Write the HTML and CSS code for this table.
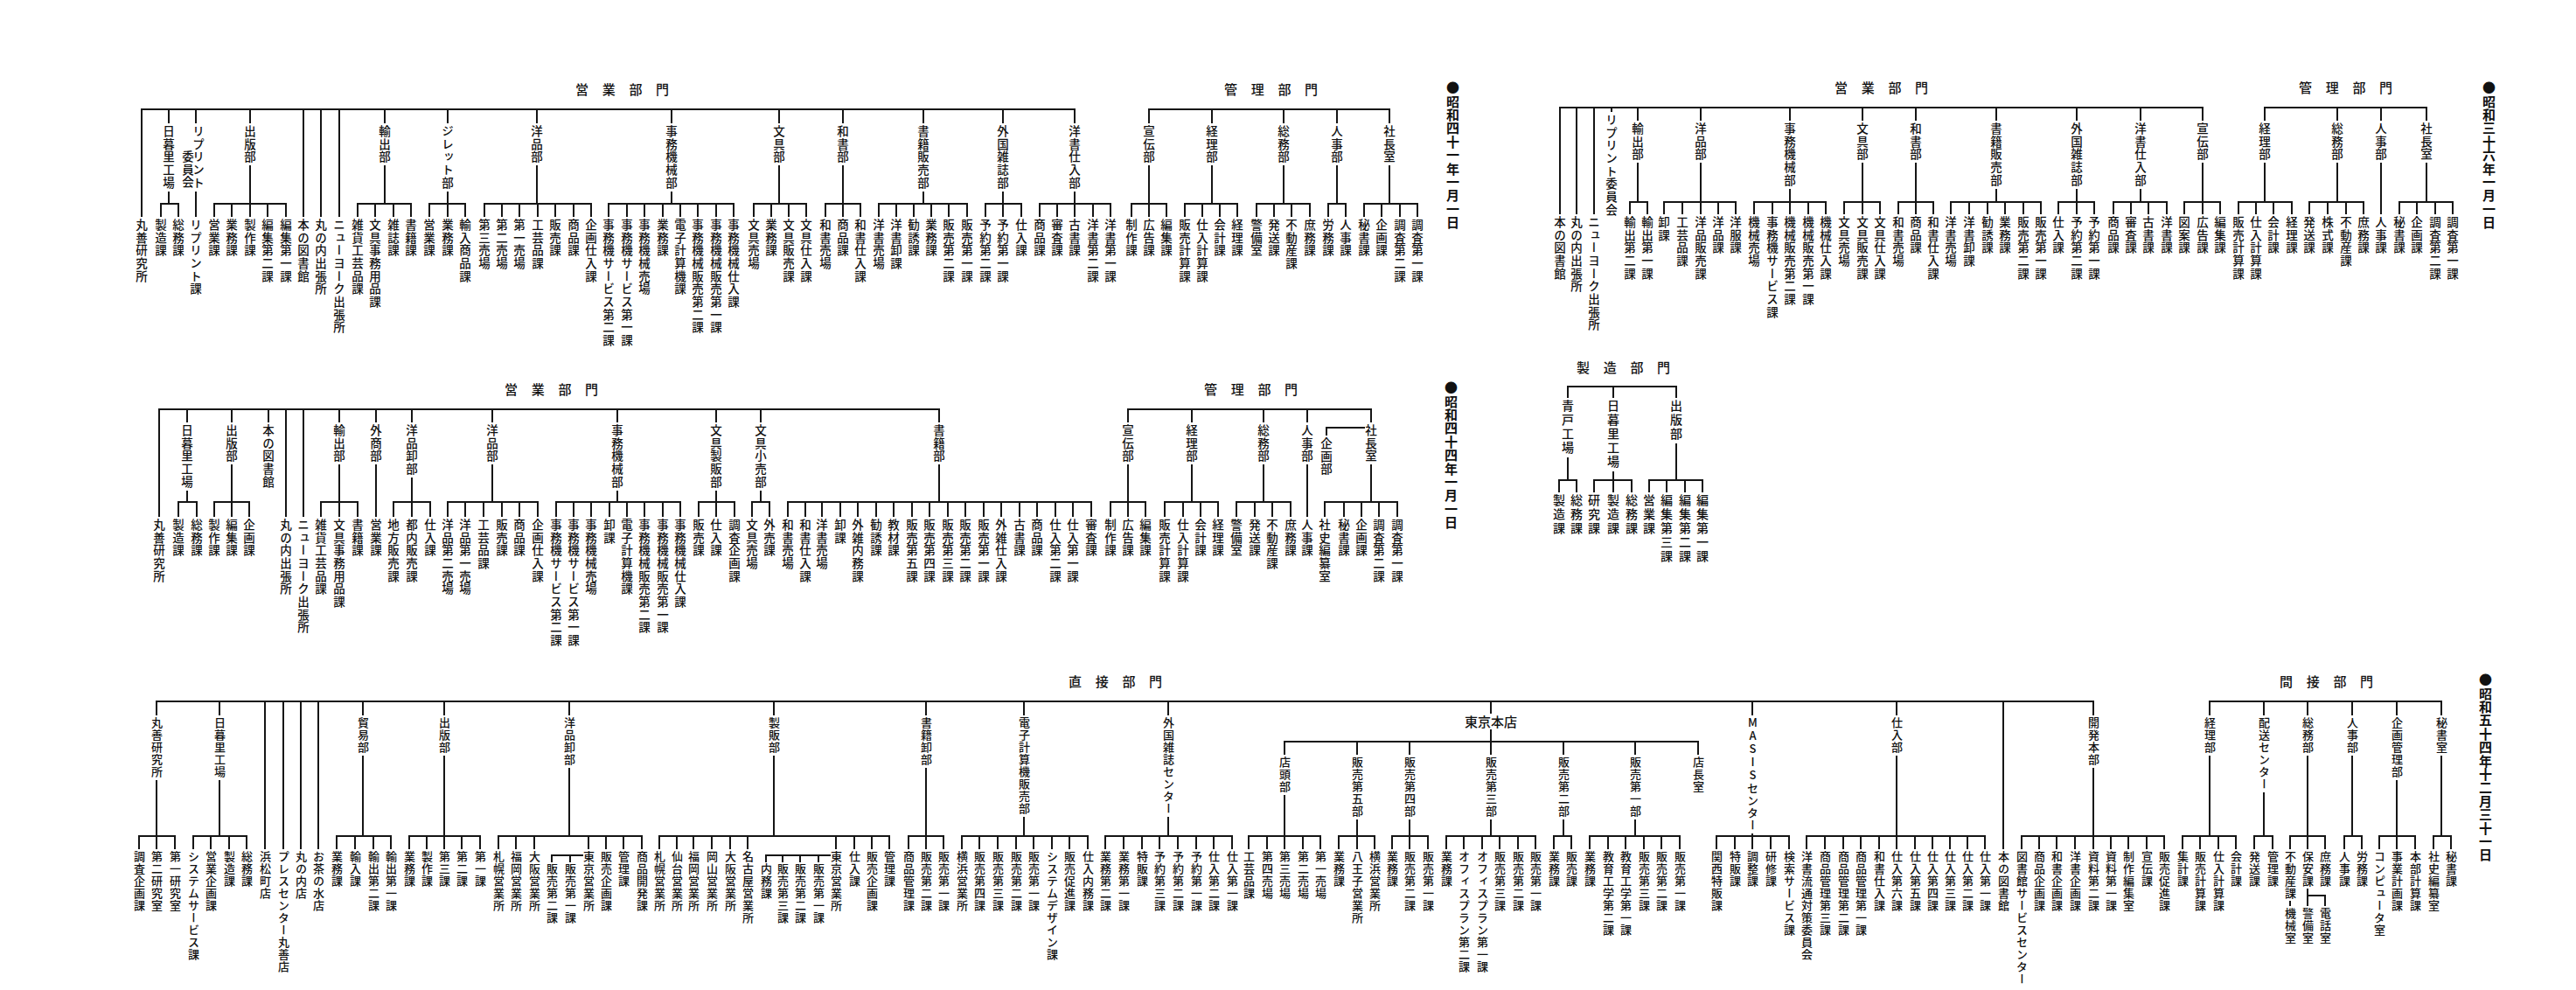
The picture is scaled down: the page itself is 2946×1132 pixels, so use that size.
FILE: index.html
```html
<!DOCTYPE html>
<html lang="ja">
<head>
<meta charset="utf-8">
<title>丸善 組織図の変遷</title>
<link rel="stylesheet" href="styles.css">
</head>
<body>
<main id="sheet" class="sheet"></main>
<script src="script.js"></script>
</body>
</html>
```

FILE: styles.css
```css
html, body {
  margin: 0;
  padding: 0;
  background: #fff;
}
body {
  width: 2946px;
  height: 1132px;
  overflow: hidden;
  font-family: "Noto Sans CJK JP", "Noto Sans", sans-serif;
  color: #111;
}
.sheet {
  position: relative;
  width: 2946px;
  height: 1132px;
  overflow: hidden;
}
.ln {
  position: absolute;
  z-index: 1;
  background: #151515;
}
.vt {
  position: absolute;
  z-index: 2;
  writing-mode: vertical-rl;
  font-size: 13.5px;
  font-weight: 500;
  line-height: 14px;
  width: 14px;
  letter-spacing: 1.2px;
  white-space: nowrap;
}
.vt.sm {
  font-size: 13px;
  letter-spacing: 1px;
}
.vt.md {
  font-size: 14px;
  letter-spacing: 2px;
}
.lab {
  background: #fff;
  padding: 2px 0;
  margin-top: -2px;
}
.vt.two {
  width: 24px;
  line-height: 12px;
  white-space: pre;
  text-align: end;
}
.up {
  text-orientation: upright;
  letter-spacing: 2px;
}
.hlab {
  position: absolute;
  z-index: 2;
  font-size: 15px;
  font-weight: 500;
  line-height: 18px;
  background: #fff;
  padding: 0 3px;
  transform: translateX(-50%);
  white-space: nowrap;
}
.ttl {
  position: absolute;
  font-size: 15px;
  font-weight: 500;
  line-height: 18px;
  letter-spacing: 15.7px;
  white-space: nowrap;
}
.date {
  position: absolute;
  writing-mode: vertical-rl;
  font-size: 15px;
  font-weight: 700;
  line-height: 16px;
  width: 16px;
  letter-spacing: 0.4px;
  white-space: nowrap;
}
```

FILE: script.js
```js
const sheet = document.getElementById('sheet');

function box(cls, x, y, w, h) {
  const d = document.createElement('div');
  d.className = cls;
  d.style.left = x + 'px';
  d.style.top = y + 'px';
  if (w !== undefined) d.style.width = w + 'px';
  if (h !== undefined) d.style.height = h + 'px';
  sheet.appendChild(d);
  return d;
}
function hl(x1, x2, y, t) {
  t = t || 1.5;
  box('ln', Math.min(x1, x2) - t / 2, y - t / 2, Math.abs(x2 - x1) + t, t);
}
function vl(x, y1, y2, t) {
  t = t || 1.5;
  box('ln', x - t / 2, y1, t, y2 - y1);
}
function txt(x, y, s, cls) {
  const d = box(cls, x - 7, y);
  if (/[A-Z]/.test(s)) {
    s.split(/([A-Z]+)/).forEach(part => {
      if (!part) return;
      if (/^[A-Z]+$/.test(part)) {
        const sp = document.createElement('span');
        sp.className = 'up';
        sp.textContent = part;
        d.appendChild(sp);
      } else {
        d.appendChild(document.createTextNode(part));
      }
    });
  } else {
    d.textContent = s;
  }
  return d;
}
function title(x, y, s) {
  const d = box('ttl', x, y);
  d.textContent = s;
}
function date(x, y, s) {
  const d = box('date', x - 8, y);
  d.textContent = '●' + s;
}

function chart(c) {
  const mod = c.size ? ' ' + c.size : '';
  const pitch = c.size === 'sm' ? 14 : (c.size === 'md' ? 16 : 14.7);
  (c.bars || []).forEach(b => hl(b[0], b[1], c.barY, 2));
  c.items.forEach(it => {
    const type = it[0], x = it[1], name = it[2], kids = it[3];
    if (type === 'L') {
      vl(x, c.barY, c.leafTop - 2);
      txt(x, c.leafTop, name, 'vt' + mod);
      return;
    }
    if (type === 'T') {
      const top = kids || c.labTop;
      vl(x, c.barY, top);
      txt(x, top, name, 'vt lab' + mod);
      return;
    }
    const xs = kids.map(k => k[0]);
    const single = kids.length === 1 && xs[0] === x;
    if (single) {
      vl(x, c.barY, c.leafTop - 2);
    } else {
      vl(x, c.barY, c.subY);
      hl(Math.min(x, ...xs), Math.max(x, ...xs), c.subY);
    }
    if (name.indexOf('\n') >= 0) {
      const d = box('vt lab two' + mod, x - 15, c.labTop);
      d.textContent = name;
    } else {
      txt(x, c.labTop, name, 'vt lab' + mod);
    }
    kids.forEach(k => {
      const kx = k[0], kn = k[1], subs = k[2], below = k[3];
      if (!single) vl(kx, c.subY, c.leafTop - 2);
      txt(kx, c.leafTop, kn, 'vt' + mod);
      if (subs) {
        const by = c.leafTop + 5;
        hl(Math.min(...subs.map(s => s[0])), kx - 7, by);
        subs.forEach(s => {
          vl(s[0], by, by + 8);
          txt(s[0], by + 9, s[1], 'vt' + mod);
        });
      }
      if (below) {
        const end = c.leafTop + kn.length * pitch;
        const by = c.belowY, st = c.belowTop;
        vl(kx, end + 1, st - 2);
        const bxs = below.map(s => s[0]);
        if (bxs.some(bx => bx !== kx)) {
          hl(Math.min(kx, ...bxs), Math.max(kx, ...bxs), by);
        }
        below.forEach(s => {
          if (s[0] !== kx) vl(s[0], by, st - 2);
          txt(s[0], st, s[1], 'vt' + mod);
        });
      }
    });
  });
}

/* ---------- 昭和四十一年一月一日 ---------- */
title(658, 93, '営業部門');
title(1400, 93, '管理部門');
date(1661, 93, '昭和四十一年一月一日');
chart({
  barY: 125, labTop: 143, subY: 233, leafTop: 250,
  bars: [[162, 1229], [1314, 1589]],
  items: [
    ['L', 162, '丸善研究所'],
    ['D', 193, '日暮里工場', [[184, '製造課'], [204, '総務課']]],
    ['D', 224, 'リプリント\n委員会', [[224, 'リプリント課']]],
    ['D', 286, '出版部', [[245, '営業課'], [265, '業務課'], [286, '製作課'], [306, '編集第二課'], [327, '編集第一課']]],
    ['L', 347, '本の図書館'],
    ['L', 367, '丸の内出張所'],
    ['L', 388, 'ニューヨーク出張所'],
    ['D', 440, '輸出部', [[409, '雑貨工芸品課'], [429, '文具事務用品課'], [450, '雑誌課'], [470, '書籍課']]],
    ['D', 512, 'ジレット部', [[491, '営業課'], [512, '業務課'], [532, '輸入商品課']]],
    ['D', 614, '洋品部', [[554, '第三売場'], [574, '第二売場'], [594, '第一売場'], [615, '工芸品課'], [635, '販売課'], [656, '商品課'], [676, '企画仕入課']]],
    ['D', 768, '事務機械部', [[696, '事務機サービス第二課'], [717, '事務機サービス第一課'], [737, '事務機械売場'], [758, '業務課'], [778, '電子計算機課'], [798, '事務機械販売第二課'], [819, '事務機械販売第一課'], [839, '事務機械仕入課']]],
    ['D', 891, '文具部', [[862, '文具売場'], [882, '業務課'], [902, '文具販売課'], [922, '文具仕入課']]],
    ['D', 964, '和書部', [[944, '和書売場'], [964, '商品課'], [984, '和書仕入課']]],
    ['D', 1056, '書籍販売部', [[1005, '洋書売場'], [1025, '洋書卸課'], [1045, '勧誘課'], [1065, '業務課'], [1085, '販売第二課'], [1106, '販売第一課']]],
    ['D', 1147, '外国雑誌部', [[1127, '予約第二課'], [1147, '予約第一課'], [1168, '仕入課']]],
    ['D', 1229, '洋書仕入部', [[1189, '商品課'], [1209, '審査課'], [1229, '古書課'], [1250, '洋書第二課'], [1270, '洋書第一課']]],
    ['D', 1314, '宣伝部', [[1294, '制作課'], [1314, '広告課'], [1334, '編集課']]],
    ['D', 1386, '経理部', [[1355, '販売計算課'], [1375, '仕入計算課'], [1395, '会計課'], [1415, '経理課']]],
    ['D', 1468, '総務部', [[1437, '警備室'], [1457, '発送課'], [1477, '不動産課'], [1498, '庶務課']]],
    ['D', 1529, '人事部', [[1519, '労務課'], [1539, '人事課']]],
    ['D', 1589, '社長室', [[1560, '秘書課'], [1580, '企画課'], [1601, '調査第二課'], [1621, '調査第一課']]]
  ]
});

/* ---------- 昭和三十六年一月一日 ---------- */
title(2098, 91, '営業部門');
title(2629, 91, '管理部門');
date(2846, 93, '昭和三十六年一月一日');
chart({
  barY: 123, labTop: 140, subY: 231, leafTop: 247,
  bars: [[1784, 2519], [2590, 2775]],
  items: [
    ['L', 1784, '本の図書館'],
    ['L', 1803, '丸の内出張所'],
    ['L', 1823, 'ニューヨーク出張所'],
    ['T', 1843, 'リプリント委員会', 130],
    ['D', 1873, '輸出部', [[1864, '輸出第二課'], [1884, '輸出第一課']]],
    ['D', 1945, '洋品部', [[1903, '卸課'], [1924, '工芸品課'], [1945, '洋品販売課'], [1965, '洋品課'], [1985, '洋服課']]],
    ['D', 2047, '事務機械部', [[2006, '機械売場'], [2027, '事務機サービス課'], [2047, '機械販売第二課'], [2068, '機械販売第一課'], [2088, '機械仕入課']]],
    ['D', 2130, '文具部', [[2109, '文具売場'], [2130, '文具販売課'], [2150, '文具仕入課']]],
    ['D', 2191, '和書部', [[2171, '和書売場'], [2191, '商品課'], [2211, '和書仕入課']]],
    ['D', 2283, '書籍販売部', [[2231, '洋書売場'], [2252, '洋書卸課'], [2273, '勧誘課'], [2293, '業務課'], [2314, '販売第二課'], [2334, '販売第一課']]],
    ['D', 2375, '外国雑誌部', [[2354, '仕入課'], [2375, '予約第二課'], [2395, '予約第一課']]],
    ['D', 2448, '洋書仕入部', [[2417, '商品課'], [2437, '審査課'], [2457, '古書課'], [2478, '洋書課']]],
    ['D', 2519, '宣伝部', [[2498, '図案課'], [2519, '広告課'], [2539, '編集課']]],
    ['D', 2590, '経理部', [[2560, '販売計算課'], [2580, '仕入計算課'], [2600, '会計課'], [2621, '経理課']]],
    ['D', 2673, '総務部', [[2641, '発送課'], [2662, '株式課'], [2683, '不動産課'], [2703, '庶務課']]],
    ['D', 2723, '人事部', [[2723, '人事課']]],
    ['D', 2775, '社長室', [[2744, '秘書課'], [2764, '企画課'], [2785, '調査第二課'], [2805, '調査第一課']]]
  ]
});

/* ---------- 昭和四十四年一月一日 ---------- */
title(577, 436, '営業部門');
title(1377, 436, '管理部門');
date(1659, 436, '昭和四十四年一月一日');
chart({
  barY: 468, labTop: 485, subY: 574, leafTop: 593,
  bars: [[182, 1074], [1290, 1568]],
  items: [
    ['L', 182, '丸善研究所'],
    ['D', 214, '日暮里工場', [[204, '製造課'], [225, '総務課']]],
    ['D', 265, '出版部', [[245, '製作課'], [265, '編集課'], [285, '企画課']]],
    ['T', 307, '本の図書館'],
    ['L', 327, '丸の内出張所'],
    ['L', 347, 'ニューヨーク出張所'],
    ['D', 388, '輸出部', [[367, '雑貨工芸品課'], [388, '文具事務用品課'], [409, '書籍課']]],
    ['D', 430, '外商部', [[430, '営業課']]],
    ['D', 471, '洋品卸部', [[450, '地方販売課'], [471, '都内販売課'], [492, '仕入課']]],
    ['D', 563, '洋品部', [[512, '洋品第二売場'], [532, '洋品第一売場'], [553, '工芸品課'], [574, '販売課'], [594, '商品課'], [615, '企画仕入課']]],
    ['D', 706, '事務機械部', [[636, '事務機サービス第二課'], [656, '事務機サービス第一課'], [676, '事務機械売場'], [697, '卸課'], [717, '電子計算機課'], [737, '事務機械販売第二課'], [758, '事務機械販売第一課'], [778, '事務機械仕入課']]],
    ['D', 819, '文具製販部', [[799, '販売課'], [819, '仕入課'], [840, '調査企画課']]],
    ['D', 870, '文具小売部', [[860, '文具売場'], [880, '外売課']]],
    ['D', 1074, '書籍部', [[901, '和書売場'], [921, '和書仕入課'], [940, '洋書売場'], [961, '卸課'], [981, '外雑内務課'], [1002, '勧誘課'], [1022, '教材課'], [1043, '販売第五課'], [1063, '販売第四課'], [1084, '販売第三課'], [1104, '販売第二課'], [1125, '販売第一課'], [1145, '外雑仕入課'], [1166, '古書課'], [1186, '商品課'], [1207, '仕入第二課'], [1227, '仕入第一課'], [1248, '審査課']]],
    ['D', 1290, '宣伝部', [[1270, '制作課'], [1290, '広告課'], [1310, '編集課']]],
    ['D', 1363, '経理部', [[1332, '販売計算課'], [1353, '仕入計算課'], [1373, '会計課'], [1393, '経理課']]],
    ['D', 1445, '総務部', [[1414, '警備室'], [1435, '発送課'], [1455, '不動産課'], [1476, '庶務課']]],
    ['D', 1495, '人事部', [[1495, '人事課']]],
    ['D', 1568, '社長室', [[1515, '社史編纂室'], [1537, '秘書課'], [1557, '企画課'], [1577, '調査第二課'], [1598, '調査第一課']]]
  ]
});
hl(1517, 1568, 489);
vl(1517, 489, 500);
txt(1517, 500, '企画部', 'vt lab');

/* ---------- 製造部門 ---------- */
title(1803, 411, '製造部門');
chart({
  size: 'md',
  barY: 442, labTop: 457, subY: 549, leafTop: 565,
  bars: [[1793, 1917]],
  items: [
    ['D', 1793, '青戸工場', [[1783, '製造課'], [1803, '総務課']]],
    ['D', 1845, '日暮里工場', [[1823, '研究課'], [1845, '製造課'], [1866, '総務課']]],
    ['D', 1917, '出版部', [[1886, '営業課'], [1906, '編集第三課'], [1927, '編集第二課'], [1947, '編集第一課']]]
  ]
});

/* ---------- 昭和五十四年十二月三十一日 ---------- */
title(1222, 770, '直接部門');
title(2607, 770, '間接部門');
date(2842, 770, '昭和五十四年十二月三十一日');
chart({
  size: 'sm',
  barY: 802, labTop: 820, subY: 956, leafTop: 973, belowY: 1024, belowTop: 1038,
  bars: [[179, 2394], [2527, 2792]],
  items: [
    ['D', 179, '丸善研究所', [[159, '調査企画課'], [179, '第二研究室'], [200, '第一研究室']]],
    ['D', 251, '日暮里工場', [[221, 'システムサービス課'], [241, '営業企画課'], [262, '製造課'], [282, '総務課']]],
    ['L', 303, '浜松町店'],
    ['L', 324, 'プレスセンター丸善店'],
    ['L', 344, '丸の内店'],
    ['L', 364, 'お茶の水店'],
    ['D', 415, '貿易部', [[385, '業務課'], [406, '輸入課'], [427, '輸出第二課'], [447, '輸出第一課']]],
    ['D', 508, '出版部', [[468, '業務課'], [488, '製作課'], [508, '第三課'], [528, '第二課'], [549, '第一課']]],
    ['D', 651, '洋品卸部', [[570, '札幌営業所'], [590, '福岡営業所'], [611, '大阪営業所'], [673, '東京営業所', [[631, '販売第二課'], [652, '販売第一課']]], [693, '販売企画課'], [713, '管理課'], [734, '商品開発課']]],
    ['D', 885, '製販部', [[754, '札幌営業所'], [774, '仙台営業所'], [793, '福岡営業所'], [814, '岡山営業所'], [835, '大阪営業所'], [855, '名古屋営業所'], [956, '東京営業所', [[876, '内務課'], [895, '販売第三課'], [915, '販売第二課'], [936, '販売第一課']]], [977, '仕入課'], [997, '販売企画課'], [1017, '管理課']]],
    ['D', 1059, '書籍卸部', [[1039, '商品管理課'], [1059, '販売第二課'], [1079, '販売第一課']]],
    ['D', 1171, '電子計算機販売部', [[1100, '横浜営業所'], [1120, '販売第四課'], [1141, '販売第三課'], [1162, '販売第二課'], [1182, '販売第一課'], [1203, 'システムデザイン課'], [1223, '販売促進課'], [1244, '仕入内務課']]],
    ['D', 1336, '外国雑誌センター', [[1264, '業務第二課'], [1285, '業務第一課'], [1306, '特販課'], [1326, '予約第三課'], [1347, '予約第二課'], [1368, '予約第一課'], [1388, '仕入第二課'], [1409, '仕入第一課']]],
    ['D', 2004, 'MASISセンター', [[1963, '関西特販課'], [1984, '特販課'], [2004, '調整課'], [2025, '研修課'], [2046, '検索サービス課']]],
    ['D', 2169, '仕入部', [[2066, '洋書流通対策委員会'], [2087, '商品管理第三課'], [2108, '商品管理第二課'], [2128, '商品管理第一課'], [2149, '和書仕入課'], [2169, '仕入第六課'], [2190, '仕入第五課'], [2210, '仕入第四課'], [2230, '仕入第三課'], [2250, '仕入第二課'], [2270, '仕入第一課']]],
    ['L', 2291, '本の図書館'],
    ['D', 2394, '開発本部', [[2312, '図書館サービスセンター'], [2332, '商品企画課'], [2352, '和書企画課'], [2373, '洋書企画課'], [2394, '資料第二課'], [2414, '資料第一課'], [2434, '制作編集室'], [2455, '宣伝課'], [2475, '販売促進課']]],
    ['D', 2527, '経理部', [[2496, '集計課'], [2516, '販売計算課'], [2537, '仕入計算課'], [2557, '会計課']]],
    ['D', 2589, '配送センター', [[2578, '発送課'], [2599, '管理課']]],
    ['D', 2639, '総務部', [[2619, '不動産課', null, [[2619, '機械室']]], [2639, '保安課', null, [[2639, '警備室'], [2659, '電話室']]], [2659, '庶務課']]],
    ['D', 2690, '人事部', [[2681, '人事課'], [2701, '労務課']]],
    ['D', 2741, '企画管理部', [[2721, 'コンピュータ室'], [2741, '事業計画課'], [2762, '本部計算課']]],
    ['D', 2792, '秘書室', [[2783, '社史編纂室'], [2803, '秘書課']]]
  ]
});

/* 東京本店 */
vl(1705, 802, 848);
hl(1469, 1942, 848);
const honten = box('hlab', 1705, 816);
honten.textContent = '東京本店';
chart({
  size: 'sm',
  barY: 848, labTop: 865, subY: 956, leafTop: 973,
  items: [
    ['D', 1469, '店頭部', [[1428, '工芸品課'], [1449, '第四売場'], [1469, '第三売場'], [1490, '第二売場'], [1510, '第一売場']]],
    ['D', 1552, '販売第五部', [[1531, '業務課'], [1552, '八王子営業所'], [1572, '横浜営業所']]],
    ['D', 1612, '販売第四部', [[1592, '業務課'], [1612, '販売第二課'], [1633, '販売第一課']]],
    ['D', 1705, '販売第三部', [[1654, '業務課'], [1674, 'オフィスプラン第二課'], [1695, 'オフィスプラン第一課'], [1715, '販売第三課'], [1736, '販売第二課'], [1756, '販売第一課']]],
    ['D', 1788, '販売第二部', [[1777, '業務課'], [1797, '販売課']]],
    ['D', 1870, '販売第一部', [[1818, '業務課'], [1839, '教育工学第二課'], [1859, '教育工学第一課'], [1880, '販売第三課'], [1900, '販売第二課'], [1921, '販売第一課']]],
    ['T', 1942, '店長室']
  ]
});
```
